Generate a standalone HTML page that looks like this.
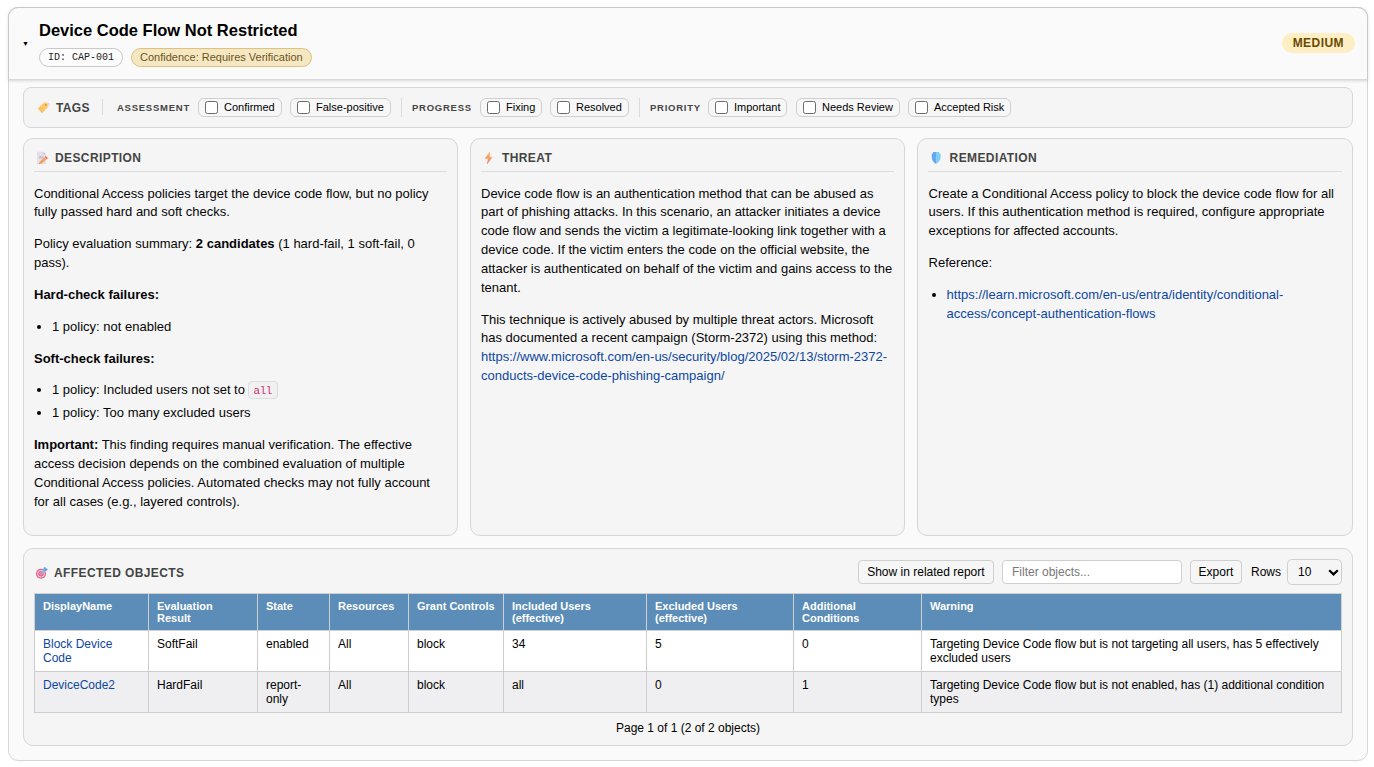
<!DOCTYPE html>
<html lang="en">
<head>
<meta charset="utf-8">
<title>Device Code Flow Not Restricted</title>
<style>
*{box-sizing:border-box}
html,body{margin:0;padding:0;background:#fff}
body{width:1374px;height:767px;overflow:hidden;font-family:"Liberation Sans",Arial,sans-serif;color:#000;font-size:13px}
.card{position:absolute;left:8px;top:7px;width:1360px;height:754px;border:1px solid #d6d6d6;border-radius:10px;background:#fafafa}
.inner{position:absolute;left:0;top:1px;width:1358px;height:751px}
.hin{position:absolute;left:0;top:1px;right:0;bottom:0}
.head{position:absolute;left:-1px;top:-2px;width:1360px;height:73px;background:#fafafa;border:1px solid #c9c9c9;border-bottom-color:#d9d9d9;border-radius:10px 10px 0 0;box-shadow:0 1px 3px rgba(0,0,0,.14)}
.arrow{position:absolute;left:13px;top:29.5px;font-size:7px;line-height:10px;color:#000}
.title{position:absolute;left:30px;top:10px;font-size:16.5px;font-weight:bold;line-height:22px;color:#000;white-space:nowrap}
.pill{position:absolute;top:39px;height:19px;border-radius:10px;font-size:10.5px;line-height:17px;padding:0 8px;white-space:nowrap}
.pill.id{left:30px;border:1px solid #c9c9c9;background:#fcfcfc;font-family:"Liberation Mono",monospace;font-size:10px;color:#222}
.pill.conf{left:122px;border:1px solid #dcc27c;background:#f6e7c3;color:#6b5520;font-size:11px;padding:0 8px}
.sev{position:absolute;right:12px;top:24px;height:20px;border-radius:10px;background:#fdeec4;color:#6a4a00;font-weight:bold;font-size:12px;line-height:20px;padding:0 11px 0 10.5px;letter-spacing:.45px}
.box{position:absolute;border:1px solid #d6d6d6;border-radius:10px;background:#f5f5f5}
.tags{left:14px;top:78px;width:1330px;height:41px;border-radius:8px}
.tags .t{position:absolute;top:0;height:39px;line-height:39px;white-space:nowrap}
.lbl{font-size:9.5px;font-weight:bold;letter-spacing:.75px;color:#444}
.chip{position:absolute;top:10px;height:19px;border:1px solid #cfcfcf;border-radius:6px;background:#f7f7f7;font-size:11px;line-height:17px;white-space:nowrap;padding:0 6px 0 25px;color:#000}
.chip i{position:absolute;left:6px;top:2px;width:13px;height:13px;border:1px solid #6b6b6b;border-radius:2.5px;background:#fff}
.sep{position:absolute;top:10px;width:1px;height:19px;background:#dcdcdc}
.sec-h{position:absolute;left:10px;right:10px;top:0;height:33px;border-bottom:1px solid #dddddd}
.sec-h span{position:absolute;left:21px;top:12px;font-size:12px;font-weight:bold;letter-spacing:.4px;color:#444;line-height:14px}
.sec-h svg{position:absolute;left:2px;top:12px}
.body{position:absolute;left:10px;right:10px;top:45.5px;font-size:13px;line-height:18.85px;color:#050505}
.body p{margin:0 0 13px 0}
.body ul{margin:0 0 13px 0;padding:0 0 0 18px}
.body li{padding-left:0}
a{color:#0d47a1;text-decoration:none}
code{font-family:"Liberation Mono",monospace;font-size:11px;line-height:1;letter-spacing:-.5px;color:#d0306f;background:#f1f1f1;border:1px solid #dddddd;border-radius:4px;padding:3px 5px 1px 5px;margin-left:-1px}

#aff .ttl{position:absolute;left:30px;top:17px;font-size:12px;font-weight:bold;letter-spacing:.4px;color:#444;line-height:14px}
#aff .ico{position:absolute;left:11px;top:18px}
.btn{position:absolute;top:11px;height:24px;border:1px solid #cfcfcf;border-radius:4px;background:#f6f6f6;font-size:12px;line-height:22px;padding:0 8px;color:#000;white-space:nowrap}
.inp{position:absolute;top:11px;height:24px;border:1px solid #cfcfcf;border-radius:4px;background:#fff;font-size:12px;line-height:22px;padding:0 9px;color:#777}
.rows{position:absolute;top:11px;left:1227px;font-size:12px;line-height:24px;color:#000}
.sel{position:absolute;top:10px;left:1263px;width:55px;height:26px;border:1px solid #cfcfcf;border-radius:5px;background:#f5f5f5;font-size:12px;line-height:24px;padding:0 0 0 10px;color:#000}
.sel svg{position:absolute;right:2.5px;top:8.5px}
table{position:absolute;left:10px;top:44px;width:1307px;border-collapse:collapse;table-layout:fixed;font-size:12px;line-height:14px}
th,td{border:1px solid #cdcdcd;text-align:left;vertical-align:top;padding:6px 8px 6px 8px;font-weight:normal;overflow:hidden}
th{background:#5b8db8;color:#fff;font-weight:bold;font-size:11px;line-height:12px;height:37px;padding:6px 8px 5px 8px;border-color:#d2d0ce}
td{height:41px}
tr.r1 td{background:#fff}
tr.r2 td{background:#efeff1}
.pg{position:absolute;left:0;right:0;top:172px;text-align:center;font-size:12px;line-height:14px;color:#000}
</style>
</head>
<body>
<div class="card"><div class="inner">
  <div class="head"><div class="hin">
    <div class="arrow">&#9660;</div>
    <div class="title">Device Code Flow Not Restricted</div>
    <div class="pill id">ID: CAP-001</div>
    <div class="pill conf">Confidence: Requires Verification</div>
    <div class="sev">MEDIUM</div>
  </div></div>

  <div class="box tags">
    <svg style="position:absolute;left:13px;top:13px" width="14" height="14" viewBox="37 101 14 14"><defs><linearGradient id="gt" x1="0" y1="1" x2="1" y2="0"><stop offset="0" stop-color="#fbb75c"/><stop offset="1" stop-color="#fdd96c"/></linearGradient></defs><circle cx="48.3" cy="104.4" r="1.1" fill="none" stroke="#cbbbe9" stroke-width=".7"/><path d="M38 108.6 L43.6 102.9 L45.6 102 L47.2 102.9 L48 106.9 L41.9 113 Z" fill="url(#gt)" stroke="url(#gt)" stroke-width=".3" stroke-linejoin="round"/><circle cx="45.8" cy="104.9" r=".9" fill="#db6c93"/></svg>
    <span class="t lbl" style="left:32px;top:1px;font-size:12px;letter-spacing:.35px">TAGS</span>
    <div class="sep" style="left:78px;top:11px;height:16px"></div>
    <span class="t lbl" style="left:93px">ASSESSMENT</span>
    <div class="chip" style="left:174px"><i></i>Confirmed</div>
    <div class="chip" style="left:266px"><i></i>False-positive</div>
    <div class="sep" style="left:377px"></div>
    <span class="t lbl" style="left:388px">PROGRESS</span>
    <div class="chip" style="left:456px"><i></i>Fixing</div>
    <div class="chip" style="left:526px"><i></i>Resolved</div>
    <div class="sep" style="left:615px"></div>
    <span class="t lbl" style="left:626px">PRIORITY</span>
    <div class="chip" style="left:684px"><i></i>Important</div>
    <div class="chip" style="left:772px"><i></i>Needs Review</div>
    <div class="chip" style="left:884px"><i></i>Accepted Risk</div>
  </div>

  <div class="box" style="left:14px;top:129px;width:435px;height:398px">
    <div class="sec-h"><svg style="position:absolute;left:2px;top:12px" width="13" height="14" viewBox="36 151 13 14"><path d="M37 151.8 H43.4 L46 154.6 V163.9 H37 Z" fill="#e4dfeb"/><path d="M43.4 151.8 L46 154.6 H43.4 Z" fill="#c9c5d1"/><rect x="39" y="156.2" width="4.6" height="2.4" fill="#c9c5cf"/><path d="M39.4 163.8 L39.9 161.6 L45.4 156.6 L47.3 158.6 L41.8 163.4 Z" fill="#f7a052"/><path d="M44.1 157.8 L44.7 157.2 L46.7 159.2 L46.1 159.8 Z" fill="#f3dcd6"/><path d="M44.7 157.2 L45.9 156.1 L47.9 158.1 L46.7 159.2 Z" fill="#f8695c"/><path d="M39.4 163.8 L39.6 162.8 L40.4 163.6 Z" fill="#7a3a6a"/></svg><span>DESCRIPTION</span></div>
    <div class="body">
      <p>Conditional Access policies target the device code flow, but no policy fully passed hard and soft checks.</p>
      <p>Policy evaluation summary: <b>2 candidates</b> (1 hard-fail, 1 soft-fail, 0 pass).</p>
      <p><b>Hard-check failures:</b></p>
      <ul><li>1 policy: not enabled</li></ul>
      <p><b>Soft-check failures:</b></p>
      <ul><li style="margin-bottom:4px">1 policy: Included users not set to <code>all</code></li><li>1 policy: Too many excluded users</li></ul>
      <p><b>Important:</b> This finding requires manual verification. The effective access decision depends on the combined evaluation of multiple Conditional Access policies. Automated checks may not fully account for all cases (e.g., layered controls).</p>
    </div>
  </div>

  <div class="box" style="left:461px;top:129px;width:435px;height:398px">
    <div class="sec-h"><svg style="position:absolute;left:3px;top:12px" width="10" height="14" viewBox="484 151 10 14"><defs><linearGradient id="gb" x1="0" y1="0" x2="0" y2="1"><stop offset="0" stop-color="#fbbd5a"/><stop offset=".55" stop-color="#f8975f"/><stop offset="1" stop-color="#f4666d"/></linearGradient></defs><path d="M489.7 152 L485.1 158.5 L488.5 158.6 L487.2 163.8 L492.1 157.2 L489.6 157.2 Z" fill="url(#gb)" stroke="url(#gb)" stroke-width=".5" stroke-linejoin="round"/></svg><span>THREAT</span></div>
    <div class="body">
      <p>Device code flow is an authentication method that can be abused as part of phishing attacks. In this scenario, an attacker initiates a device code flow and sends the victim a legitimate-looking link together with a device code. If the victim enters the code on the official website, the attacker is authenticated on behalf of the victim and gains access to the tenant.</p>
      <p>This technique is actively abused by multiple threat actors. Microsoft has documented a recent campaign (Storm-2372) using this method: <a>https://www.microsoft.com/en-us/security/blog/2025/02/13/storm-2372-conducts-device-code-phishing-campaign/</a></p>
    </div>
  </div>

  <div class="box" style="left:908px;top:129px;width:436px;height:398px">
    <div class="sec-h"><svg style="position:absolute;left:2px;top:12px" width="12" height="14" viewBox="930 151 12 14"><path d="M933.2 152 H936 V163.9 C933.6 162.4 932 160.6 931.8 158 L931.6 154.3 C932.4 153.9 933 153.2 933.2 152 Z" fill="#69a6ee"/><path d="M938.9 152 H936 V163.9 C938.4 162.4 940.3 160.6 940.6 158 L940.8 154.3 C940 153.9 939.2 153.2 938.9 152 Z" fill="#7dcff8"/></svg><span style="left:21.6px">REMEDIATION</span></div>
    <div class="body" style="left:10.6px;right:9.4px">
      <p>Create a Conditional Access policy to block the device code flow for all users. If this authentication method is required, configure appropriate exceptions for affected accounts.</p>
      <p>Reference:</p>
      <ul><li><a>https://learn.microsoft.com/en-us/entra/identity/conditional-access/concept-authentication-flows</a></li></ul>
    </div>
  </div>

  <div class="box" id="aff" style="left:14px;top:539px;width:1330px;height:198px">
    <svg class="ico" style="position:absolute;left:11px;top:17px" width="14" height="14" viewBox="35 566 14 14"><circle cx="41" cy="573.7" r="5.05" fill="#ee5a83"/><circle cx="41" cy="573.7" r="3.25" fill="none" stroke="#ddd6ea" stroke-width="1.15"/><circle cx="41" cy="573.7" r="1.25" fill="none" stroke="#e3cfe2" stroke-width=".6"/><path d="M41.2 573.5 L42.4 572.3" stroke="#8f96ad" stroke-width=".8" stroke-linecap="round"/><path d="M42.3 572.5 L44.8 570" stroke="#6cc6f8" stroke-width="2.2"/><path d="M43.6 569.6 L43.7 567.5 L45.4 567 L45.8 568.4 L47.3 568.6 L47.6 570.3 L45.4 571.3 Z" fill="#5aa2f0"/></svg>
    <div class="ttl">AFFECTED OBJECTS</div>
    <div class="btn" style="left:834px;padding:0 8.2px">Show in related report</div>
    <div class="inp" style="left:978px;width:180px">Filter objects...</div>
    <div class="btn" style="left:1166px;padding:0 7.6px">Export</div>
    <div class="rows">Rows</div>
    <div class="sel">10<svg width="11" height="7" viewBox="0 0 11 7"><path d="M1.2 1.2 L5.5 5.4 L9.8 1.2" fill="none" stroke="#000" stroke-width="2.2"/></svg></div>
    <table>
      <colgroup><col style="width:114px"><col style="width:109px"><col style="width:72px"><col style="width:79px"><col style="width:95px"><col style="width:143px"><col style="width:147px"><col style="width:128px"><col style="width:420px"></colgroup>
      <tr><th>DisplayName</th><th>Evaluation Result</th><th>State</th><th>Resources</th><th>Grant Controls</th><th>Included Users (effective)</th><th>Excluded Users (effective)</th><th>Additional Conditions</th><th>Warning</th></tr>
      <tr class="r1"><td><a>Block Device Code</a></td><td>SoftFail</td><td>enabled</td><td>All</td><td>block</td><td>34</td><td>5</td><td>0</td><td>Targeting Device Code flow but is not targeting all users, has 5 effectively excluded users</td></tr>
      <tr class="r2"><td><a>DeviceCode2</a></td><td>HardFail</td><td>report-only</td><td>All</td><td>block</td><td>all</td><td>0</td><td>1</td><td>Targeting Device Code flow but is not enabled, has (1) additional condition types</td></tr>
    </table>
    <div class="pg">Page 1 of 1 (2 of 2 objects)</div>
  </div>
</div></div>
</body>
</html>
